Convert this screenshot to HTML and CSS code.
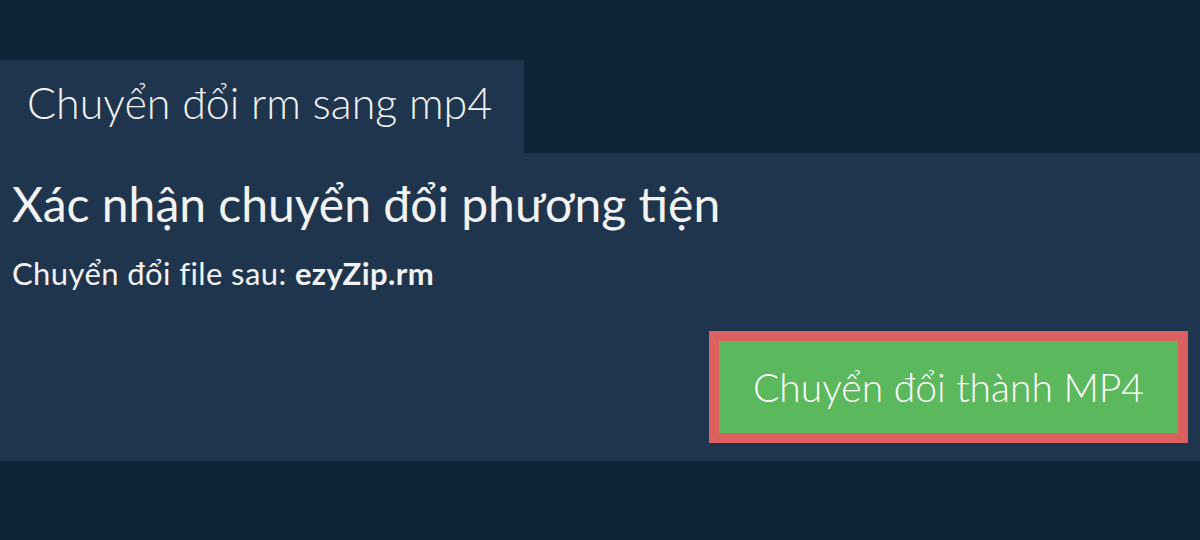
FILE: index.html
```html
<!DOCTYPE html>
<html lang="vi">
<head>
  <meta charset="UTF-8" />
  <meta name="viewport" content="width=device-width, initial-scale=1.0"/>
  <title>Chuyển đổi rm sang mp4</title>
  <link rel="stylesheet" href="styles.css">
</head>
<body>
  <div class="page">
    <div class="tabs">
      <div class="tab">Chuyển đổi rm sang mp4</div>
    </div>

    <div class="panel">
      <h2>Xác nhận chuyển đổi phương tiện</h2>
      <p class="file-line">Chuyển đổi file sau: <b>ezyZip.rm</b></p>

      <div class="actions">
        <button class="convert">Chuyển đổi thành MP4</button>
      </div>
    </div>
  </div>
</body>
</html>
```

FILE: styles.css
```css
body {
  font-family: Lato, 'Noto Sans', sans-serif;
  margin: 0;
  padding: 0;
  background-color: #0f2339;
  color: #f2f2f2;
}

.page {
  padding-top: 60px;
}

.tabs {
  display: flex;
}

.tab {
  background-color: #1f354d;
  width: 524px;
  height: 93px;
  box-sizing: border-box;
  padding: 0 0 8px 27px;
  display: flex;
  align-items: center;
  font-size: 43px;
  font-weight: 300;
}

.panel {
  background-color: #1f354d;
  padding: 20px 12px 20px 12px;
  height: 308px;
  box-sizing: border-box;
}

h2 {
  font-size: 48px;
  font-weight: 400;
  margin: 2px 0 21px;
  line-height: 1.2;
}

.file-line {
  font-size: 31px;
  font-weight: 400;
  letter-spacing: 0.4px;
  margin: 0;
}

.file-line b {
  font-weight: 700;
}

.actions {
  display: flex;
  justify-content: flex-end;
  margin-top: 39px;
  padding-right: 0;
}

.convert {
  font-family: Lato, 'Noto Sans', sans-serif;
  font-size: 39px;
  font-weight: 300;
  color: white;
  background-color: #5cb85c;
  border: 10px solid #dc605e;
  width: 479px;
  height: 112px;
  cursor: pointer;
}
```
